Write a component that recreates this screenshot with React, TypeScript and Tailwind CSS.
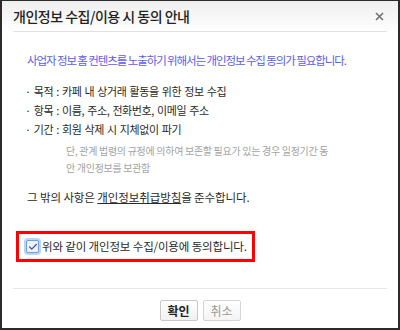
import { Check } from "lucide-react";

function CloseIcon() {
  return (
    <svg width="9" height="9" viewBox="0 0 9 9" className="text-[#707070]">
      <path d="M1 1L8 8M8 1L1 8" stroke="currentColor" strokeWidth="1.6" />
    </svg>
  );
}

export default function App() {
  return (
    <div className="flex h-[330px] w-[400px] flex-col border-2 border-t border-[#2b2b2b] bg-white font-['Noto_Sans_CJK_KR',sans-serif] text-[#2a2a2a]">
      {/* Header */}
      <div className="bg-gradient-to-b from-[#efefef] to-white px-[11px]">
        <div className="flex h-[30px] items-center justify-between">
          <h1 className="text-[14px] font-medium tracking-[-0.5px] text-[#222]">
            개인정보 수집/이용 시 동의 안내
          </h1>
          <button type="button" className="mr-[3px]">
            <CloseIcon />
          </button>
        </div>
        <div className="border-b border-[#e2e2e2]" />
      </div>

      {/* Body */}
      <div className="flex flex-1 flex-col pl-[23px]">
        <p className="ml-[2px] mt-[20px] text-[11.5px] leading-[16px] tracking-[-1.1px] text-[#5c5cec]">
          사업자 정보 홈 컨텐츠를 노출하기 위해서는 개인정보 수집 동의가 필요합니다.
        </p>

        <ul className="mt-[14px] text-[11px] leading-[19px] tracking-[-0.4px] [word-spacing:1px]">
          <li>· 목적 : 카페 내 상거래 활동을 위한 정보 수집</li>
          <li>· 항목 : 이름, 주소, 전화번호, 이메일 주소</li>
          <li>· 기간 : 회원 삭제 시 지체없이 파기</li>
        </ul>
        <p className="ml-[41px] mt-[3px] w-[280px] text-[10px] leading-[17px] tracking-[-0.3px] text-[#a3a3a3]">
          단, 관계 법령의 규정에 의하여 보존할 필요가 있는 경우 일정기간 동
          <br />안 개인정보를 보관함
        </p>

        <p className="ml-[2px] mt-[12px] text-[11.5px] leading-[18px] tracking-[-0.1px]">
          그 밖의 사항은 <span className="underline">개인정보취급방침</span>을
          준수합니다.
        </p>

        {/* Agreement box */}
        <div className="-ml-[9px] mt-[25px] flex h-[31px] w-[239px] items-center border-[3px] border-[#ff0000]">
          <label className="flex items-center gap-[3px] pl-[7px] text-[11.5px] tracking-[-0.15px]">
            <span className="flex h-[13px] w-[13px] items-center justify-center rounded-[2px] border border-[#6f9fe0] bg-[#eef3fb] shadow-[0_0_0_2px_#b9d4f5]">
              <Check size={10} strokeWidth={3} className="text-[#3f4fc0]" />
            </span>
            위와 같이 개인정보 수집/이용에 동의합니다.
          </label>
        </div>
      </div>

      {/* Footer */}
      <div className="px-[11px] pb-[7px]">
        <div className="border-t border-[#e6e6e6]" />
        <div className="mt-[11px] flex justify-center gap-[5px]">
          <button
            type="button"
            className="h-[21px] w-[38px] rounded-[2px] border border-[#c8c8c8] bg-gradient-to-b from-white to-[#f1f1f1] text-[12px] font-bold text-[#222]"
          >
            확인
          </button>
          <button
            type="button"
            className="h-[21px] w-[38px] rounded-[2px] border border-[#d5d5d5] bg-gradient-to-b from-white to-[#f4f4f4] text-[12px] text-[#9a9a9a]"
          >
            취소
          </button>
        </div>
      </div>
    </div>
  );
}
